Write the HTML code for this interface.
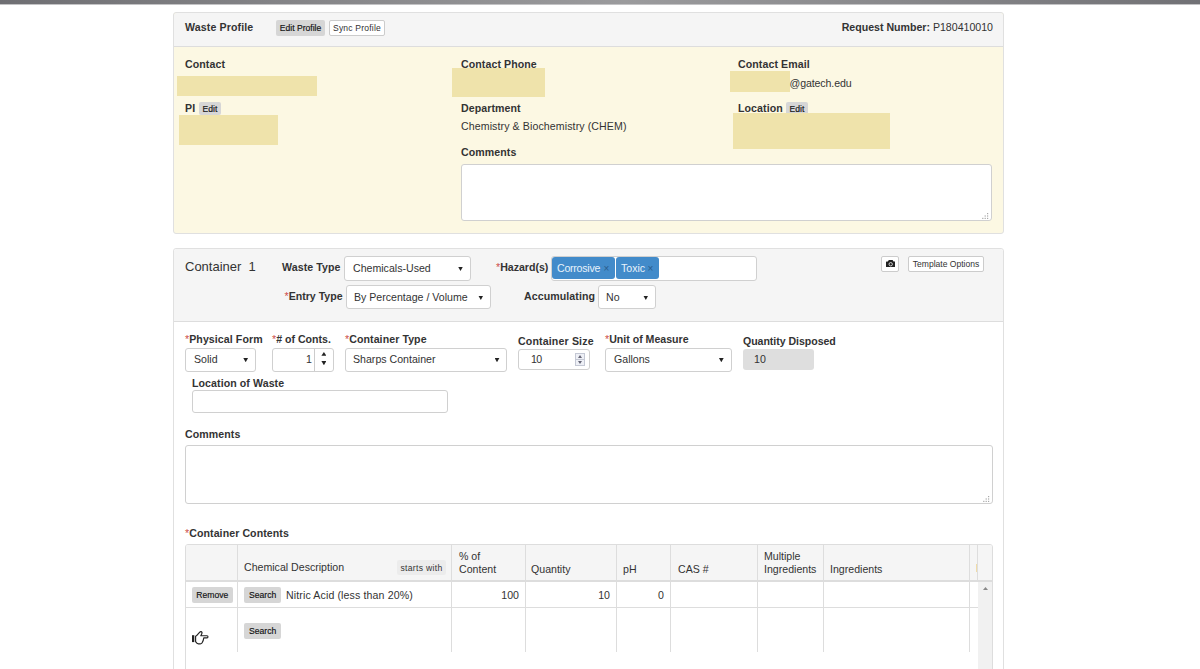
<!DOCTYPE html>
<html>
<head>
<meta charset="utf-8">
<title>Waste Profile</title>
<style>
*{box-sizing:border-box;}
html,body{margin:0;padding:0;}
body{width:1200px;height:669px;overflow:hidden;background:#fff;position:relative;
  font-family:"Liberation Sans",Arial,sans-serif;font-size:11px;color:#333;}
.abs{position:absolute;}
.topbar{left:0;top:0;width:1200px;height:5px;background:linear-gradient(90deg,#6f6f73 0%,#858588 25%,#9b9b9d 52%,#88888b 75%,#717175 100%);border-bottom:1px solid #c3c3c5;}
.panel{border:1px solid #e0e0e0;border-radius:3px;background:#fff;}
.phead{background:#f5f5f5;border-bottom:1px solid #ddd;left:0;top:0;}
.lbl{font-weight:bold;letter-spacing:0.08px;font-size:10.6px;line-height:12px;white-space:nowrap;color:#333;}
.txt{font-size:10.6px;line-height:12px;white-space:nowrap;color:#333;}
.red{background:#efe3ab;}
.btn{font-size:8.6px;line-height:10px;white-space:nowrap;color:#111;-webkit-text-stroke:0.15px #111;border-radius:2px;text-align:center;}
.btn.g{background:#d6d6d6;}
.btn.w{background:#fff;border:1px solid #ccc;font-size:8.55px;color:#333;-webkit-text-stroke:0;}
.inp{background:#fff;border:1px solid #d0d0d0;border-radius:3px;}
.star{color:#cc4a48;font-weight:normal;}
.arrow{width:5px;height:4.5px;background:#222;clip-path:polygon(0 0,100% 0,50% 100%);}

.sel .st{position:absolute;font-size:10.6px;line-height:12px;white-space:nowrap;color:#333;}
.tag{background:#428bca;border-radius:3px;color:#e8f2fb;font-size:10.6px;line-height:12px;white-space:nowrap;}
.tag .x{color:#2b5d8c;font-size:10px;}
.arrow.up{clip-path:polygon(50% 0,100% 100%,0 100%);}
.arrow.s{width:4px;height:3px;background:#667;}

.spin{border:1px solid #c4c8d4;background:#eef0f6;}
.vl{top:0;width:1px;height:107px;background:#ddd;}
</style>
</head>
<body>
<div class="abs topbar"></div>

<!-- Panel 1 -->
<div class="abs panel" id="p1" style="left:173px;top:12px;width:831px;height:222px;background:#fcf8e3;">
  <div class="abs phead" style="width:829px;height:34px;border-radius:3px 3px 0 0;"></div>
</div>
<div class="abs lbl" style="left:185px;top:21px;letter-spacing:0.12px;">Waste Profile</div>
<div class="abs btn g" style="left:276px;top:20px;width:49px;height:16px;line-height:16px;">Edit Profile</div>
<div class="abs btn w" style="left:329px;top:20px;width:56px;height:16px;line-height:14px;letter-spacing:0.2px;">Sync Profile</div>
<div class="abs txt" style="right:207px;top:21px;"><b>Request Number:</b> P180410010</div>

<div class="abs lbl" style="left:185px;top:58px;">Contact</div>
<div class="abs red" style="left:177px;top:76px;width:140px;height:20px;"></div>
<div class="abs lbl" style="left:185px;top:102px;">PI</div>
<div class="abs btn g" style="left:199px;top:102px;width:22px;height:13px;line-height:14.5px;">Edit</div>
<div class="abs red" style="left:179px;top:115px;width:99px;height:30px;"></div>

<div class="abs lbl" style="left:461px;top:58px;">Contact Phone</div>
<div class="abs red" style="left:452px;top:68px;width:93px;height:29px;"></div>
<div class="abs lbl" style="left:461px;top:102px;">Department</div>
<div class="abs txt" style="left:461px;top:120px;letter-spacing:0.1px;">Chemistry &amp; Biochemistry (CHEM)</div>
<div class="abs lbl" style="left:461px;top:146px;">Comments</div>
<div class="abs inp" style="left:461px;top:164px;width:531px;height:57px;"><svg class="abs" style="right:2px;bottom:0px;" width="7" height="7" viewBox="0 0 7 7"><g fill="#a8a8a8"><rect x="5" y="0" width="1.2" height="1.2"/><rect x="2.6" y="2.4" width="1.2" height="1.2"/><rect x="5" y="2.4" width="1.2" height="1.2"/><rect x="0.2" y="4.8" width="1.2" height="1.2"/><rect x="2.6" y="4.8" width="1.2" height="1.2"/><rect x="5" y="4.8" width="1.2" height="1.2"/></g></svg></div>

<div class="abs lbl" style="left:738px;top:58px;">Contact Email</div>
<div class="abs red" style="left:730px;top:71px;width:60px;height:21px;"></div>
<div class="abs txt" style="left:789.5px;top:77px;letter-spacing:-0.1px;">@gatech.edu</div>
<div class="abs lbl" style="left:738px;top:102px;">Location</div>
<div class="abs btn g" style="left:786px;top:102px;width:22px;height:13px;line-height:14.5px;">Edit</div>
<div class="abs red" style="left:733px;top:113px;width:157px;height:36px;"></div>

<!-- Panel 2 -->
<div class="abs panel" id="p2" style="left:173px;top:248px;width:831px;height:440px;">
  <div class="abs phead" style="width:829px;height:73px;border-radius:3px 3px 0 0;"></div>
</div>


<!-- Panel 2 header -->
<div class="abs" style="left:185px;top:259px;font-size:13px;line-height:15px;white-space:pre;color:#333;">Container  1</div>
<div class="abs lbl" style="left:282px;top:261px;">Waste Type</div>
<div class="abs inp sel" style="left:344px;top:256px;width:127px;height:25px;"><span class="st" style="left:8px;top:5px;">Chemicals-Used</span><i class="abs arrow" style="left:113px;top:9.5px;"></i></div>
<div class="abs lbl" style="left:284.5px;top:290px;letter-spacing:0;"><span class="star">*</span>Entry Type</div>
<div class="abs inp sel" style="left:346px;top:285px;width:145px;height:24px;"><span class="st" style="left:7px;top:5px;">By Percentage / Volume</span><i class="abs arrow" style="left:131.3px;top:9.5px;"></i></div>

<div class="abs lbl" style="left:496px;top:261px;letter-spacing:0;"><span class="star">*</span>Hazard(s)</div>
<div class="abs inp" style="left:551px;top:256px;width:206px;height:25px;"></div>
<div class="abs tag" style="left:552px;top:257px;width:63px;height:22px;"><span class="abs" style="left:5px;top:5px;letter-spacing:-0.25px;">Corrosive</span><span class="abs x" style="left:51.5px;top:6px;">×</span></div>
<div class="abs tag" style="left:616px;top:257px;width:43px;height:22px;"><span class="abs" style="left:5px;top:5px;">Toxic</span><span class="abs x" style="left:31.5px;top:6px;">×</span></div>
<div class="abs lbl" style="left:524px;top:290px;">Accumulating</div>
<div class="abs inp sel" style="left:598px;top:285px;width:58px;height:24px;"><span class="st" style="left:7px;top:5px;">No</span><i class="abs arrow" style="left:44.3px;top:9.5px;"></i></div>

<div class="abs btn w" style="left:881px;top:256px;width:18px;height:16px;">
<svg class="abs" style="left:3.6px;top:2.9px;" width="9.4" height="7.5" viewBox="0 0 20 16" preserveAspectRatio="none"><path d="M6 0h8l2 3h3a1 1 0 0 1 1 1v11a1 1 0 0 1-1 1H1a1 1 0 0 1-1-1V4a1 1 0 0 1 1-1h3z" fill="#222"/><circle cx="10" cy="9" r="3.6" fill="none" stroke="#fff" stroke-width="1.6"/></svg>
</div>
<div class="abs btn w" style="left:908px;top:256px;width:76px;height:16px;line-height:14px;">Template Options</div>

<!-- Form row -->
<div class="abs lbl" style="left:185px;top:333px;"><span class="star">*</span>Physical Form</div>
<div class="abs inp sel" style="left:185px;top:348px;width:71px;height:24px;"><span class="st" style="left:8px;top:4px;">Solid</span><i class="abs arrow" style="left:57.2px;top:8.8px;"></i></div>
<div class="abs lbl" style="left:272px;top:333px;letter-spacing:0;"><span class="star">*</span># of Conts.</div>
<div class="abs inp" style="left:272px;top:348px;width:62px;height:24px;">
  <span class="abs txt" style="right:21px;top:4px;">1</span>
  <i class="abs" style="left:41px;top:0;width:1px;height:22px;background:#ccc;"></i>
  <i class="abs arrow up" style="left:48.4px;top:2.9px;height:3.8px;"></i>
  <i class="abs arrow" style="left:48.4px;top:12.1px;height:4.2px;"></i>
</div>
<div class="abs lbl" style="left:345px;top:333px;"><span class="star">*</span>Container Type</div>
<div class="abs inp sel" style="left:345px;top:348px;width:162px;height:24px;"><span class="st" style="left:7px;top:4px;">Sharps Container</span><i class="abs arrow" style="left:148.5px;top:8.8px;"></i></div>
<div class="abs lbl" style="left:518px;top:335px;letter-spacing:0.15px;">Container Size</div>
<div class="abs inp" style="left:518px;top:349px;width:72px;height:21px;">
  <span class="abs txt" style="left:12px;top:3px;letter-spacing:-0.6px;">10</span>
  <span class="abs spin" style="left:56px;top:3px;width:10px;height:13px;"><i class="abs arrow up s" style="left:2px;top:1px;"></i><i class="abs" style="left:0;top:5px;width:8px;height:1px;background:#c4c8d4;"></i><i class="abs arrow s" style="left:2px;top:7px;"></i></span>
</div>
<div class="abs lbl" style="left:605px;top:333px;letter-spacing:0;"><span class="star">*</span>Unit of Measure</div>
<div class="abs inp sel" style="left:605px;top:348px;width:127px;height:24px;"><span class="st" style="left:8px;top:4px;">Gallons</span><i class="abs arrow" style="left:112.8px;top:8.8px;"></i></div>
<div class="abs lbl" style="left:743px;top:335px;letter-spacing:-0.05px;">Quantity Disposed</div>
<div class="abs" style="left:743px;top:349px;width:71px;height:21px;background:#dedede;border-radius:3px;"><span class="abs txt" style="left:11px;top:4px;">10</span></div>

<div class="abs lbl" style="left:192px;top:377px;">Location of Waste</div>
<div class="abs inp" style="left:192px;top:390px;width:256px;height:23px;"></div>

<div class="abs lbl" style="left:185px;top:428px;">Comments</div>
<div class="abs inp" style="left:185px;top:445px;width:808px;height:59px;"><svg class="abs" style="right:2px;bottom:0px;" width="7" height="7" viewBox="0 0 7 7"><g fill="#a8a8a8"><rect x="5" y="0" width="1.2" height="1.2"/><rect x="2.6" y="2.4" width="1.2" height="1.2"/><rect x="5" y="2.4" width="1.2" height="1.2"/><rect x="0.2" y="4.8" width="1.2" height="1.2"/><rect x="2.6" y="4.8" width="1.2" height="1.2"/><rect x="5" y="4.8" width="1.2" height="1.2"/></g></svg></div>

<div class="abs lbl" style="left:185px;top:527px;"><span class="star">*</span>Container Contents</div>

<!-- Table -->
<div class="abs" id="tbl" style="left:185px;top:544px;width:808px;height:140px;border:1px solid #ddd;border-radius:3px 3px 0 0;background:#fff;overflow:hidden;">
  <div class="abs" style="left:0;top:0;width:806px;height:37px;background:#f5f5f5;border-bottom:2px solid #ddd;"></div>
  <div class="abs" style="left:792px;top:37px;width:14px;height:110px;background:#f1f1f1;"></div>
  <div class="abs" style="left:0;top:62px;width:792px;height:1px;background:#ddd;"></div>
  <i class="abs vl" style="left:51px;"></i><i class="abs vl" style="left:265px;"></i><i class="abs vl" style="left:339px;"></i><i class="abs vl" style="left:430px;"></i><i class="abs vl" style="left:484px;"></i><i class="abs vl" style="left:571px;"></i><i class="abs vl" style="left:637px;"></i><i class="abs vl" style="left:783px;"></i><i class="abs vl" style="left:791px;height:37px;"></i>
  <i class="abs" style="left:790px;top:19px;width:1px;height:8px;background:#f0dca8;"></i>
  <i class="abs arrow up s" style="left:797px;top:42px;background:#888;width:5px;height:3px;"></i>
</div>
<div class="abs txt" style="left:244px;top:561px;">Chemical Description</div>
<div class="abs btn" style="left:397px;top:560px;width:49px;height:15px;line-height:16px;background:#ececec;color:#333;-webkit-text-stroke:0;letter-spacing:0.3px;">starts with</div>
<div class="abs txt" style="left:459px;top:550px;line-height:13px;">% of<br>Content</div>
<div class="abs txt" style="left:531px;top:563px;">Quantity</div>
<div class="abs txt" style="left:623px;top:563px;">pH</div>
<div class="abs txt" style="left:678px;top:563px;">CAS #</div>
<div class="abs txt" style="left:764px;top:550px;line-height:13px;">Multiple<br>Ingredients</div>
<div class="abs txt" style="left:830px;top:563px;">Ingredients</div>

<div class="abs btn g" style="left:192px;top:587px;width:40.5px;height:16px;line-height:16px;">Remove</div>
<div class="abs btn g" style="left:244px;top:587px;width:37.3px;height:16px;line-height:16px;">Search</div>
<div class="abs txt" style="left:286px;top:589px;letter-spacing:0.12px;">Nitric Acid (less than 20%)</div>
<div class="abs txt" style="right:681px;top:589px;">100</div>
<div class="abs txt" style="right:590px;top:589px;">10</div>
<div class="abs txt" style="right:536px;top:589px;">0</div>
<div class="abs btn g" style="left:244px;top:623px;width:37.3px;height:16px;line-height:16px;">Search</div>
<svg class="abs" style="left:192px;top:631px;" width="17" height="14" viewBox="0 0 17 14"><rect x="0" y="4.2" width="2.3" height="6.9" fill="#222"/><path d="M3.6 5.3 C5 4.7 6.6 2.5 7.6 1.3 C8.4 0.3 9.6 0.5 10 1.5 C10.3 2.5 9.4 3.7 8.8 4.7 L15 4.7 C16.3 4.7 16.3 6.9 15 6.9 L11.8 6.9 C11.6 8.5 10.8 10.8 10 12 C9.6 12.6 9 12.8 8.2 12.8 L6.4 12.8 C5 12.8 4.2 11.6 3.6 10.6 Z" fill="none" stroke="#222" stroke-width="1.15" stroke-linejoin="round"/></svg>

</body>
</html>
